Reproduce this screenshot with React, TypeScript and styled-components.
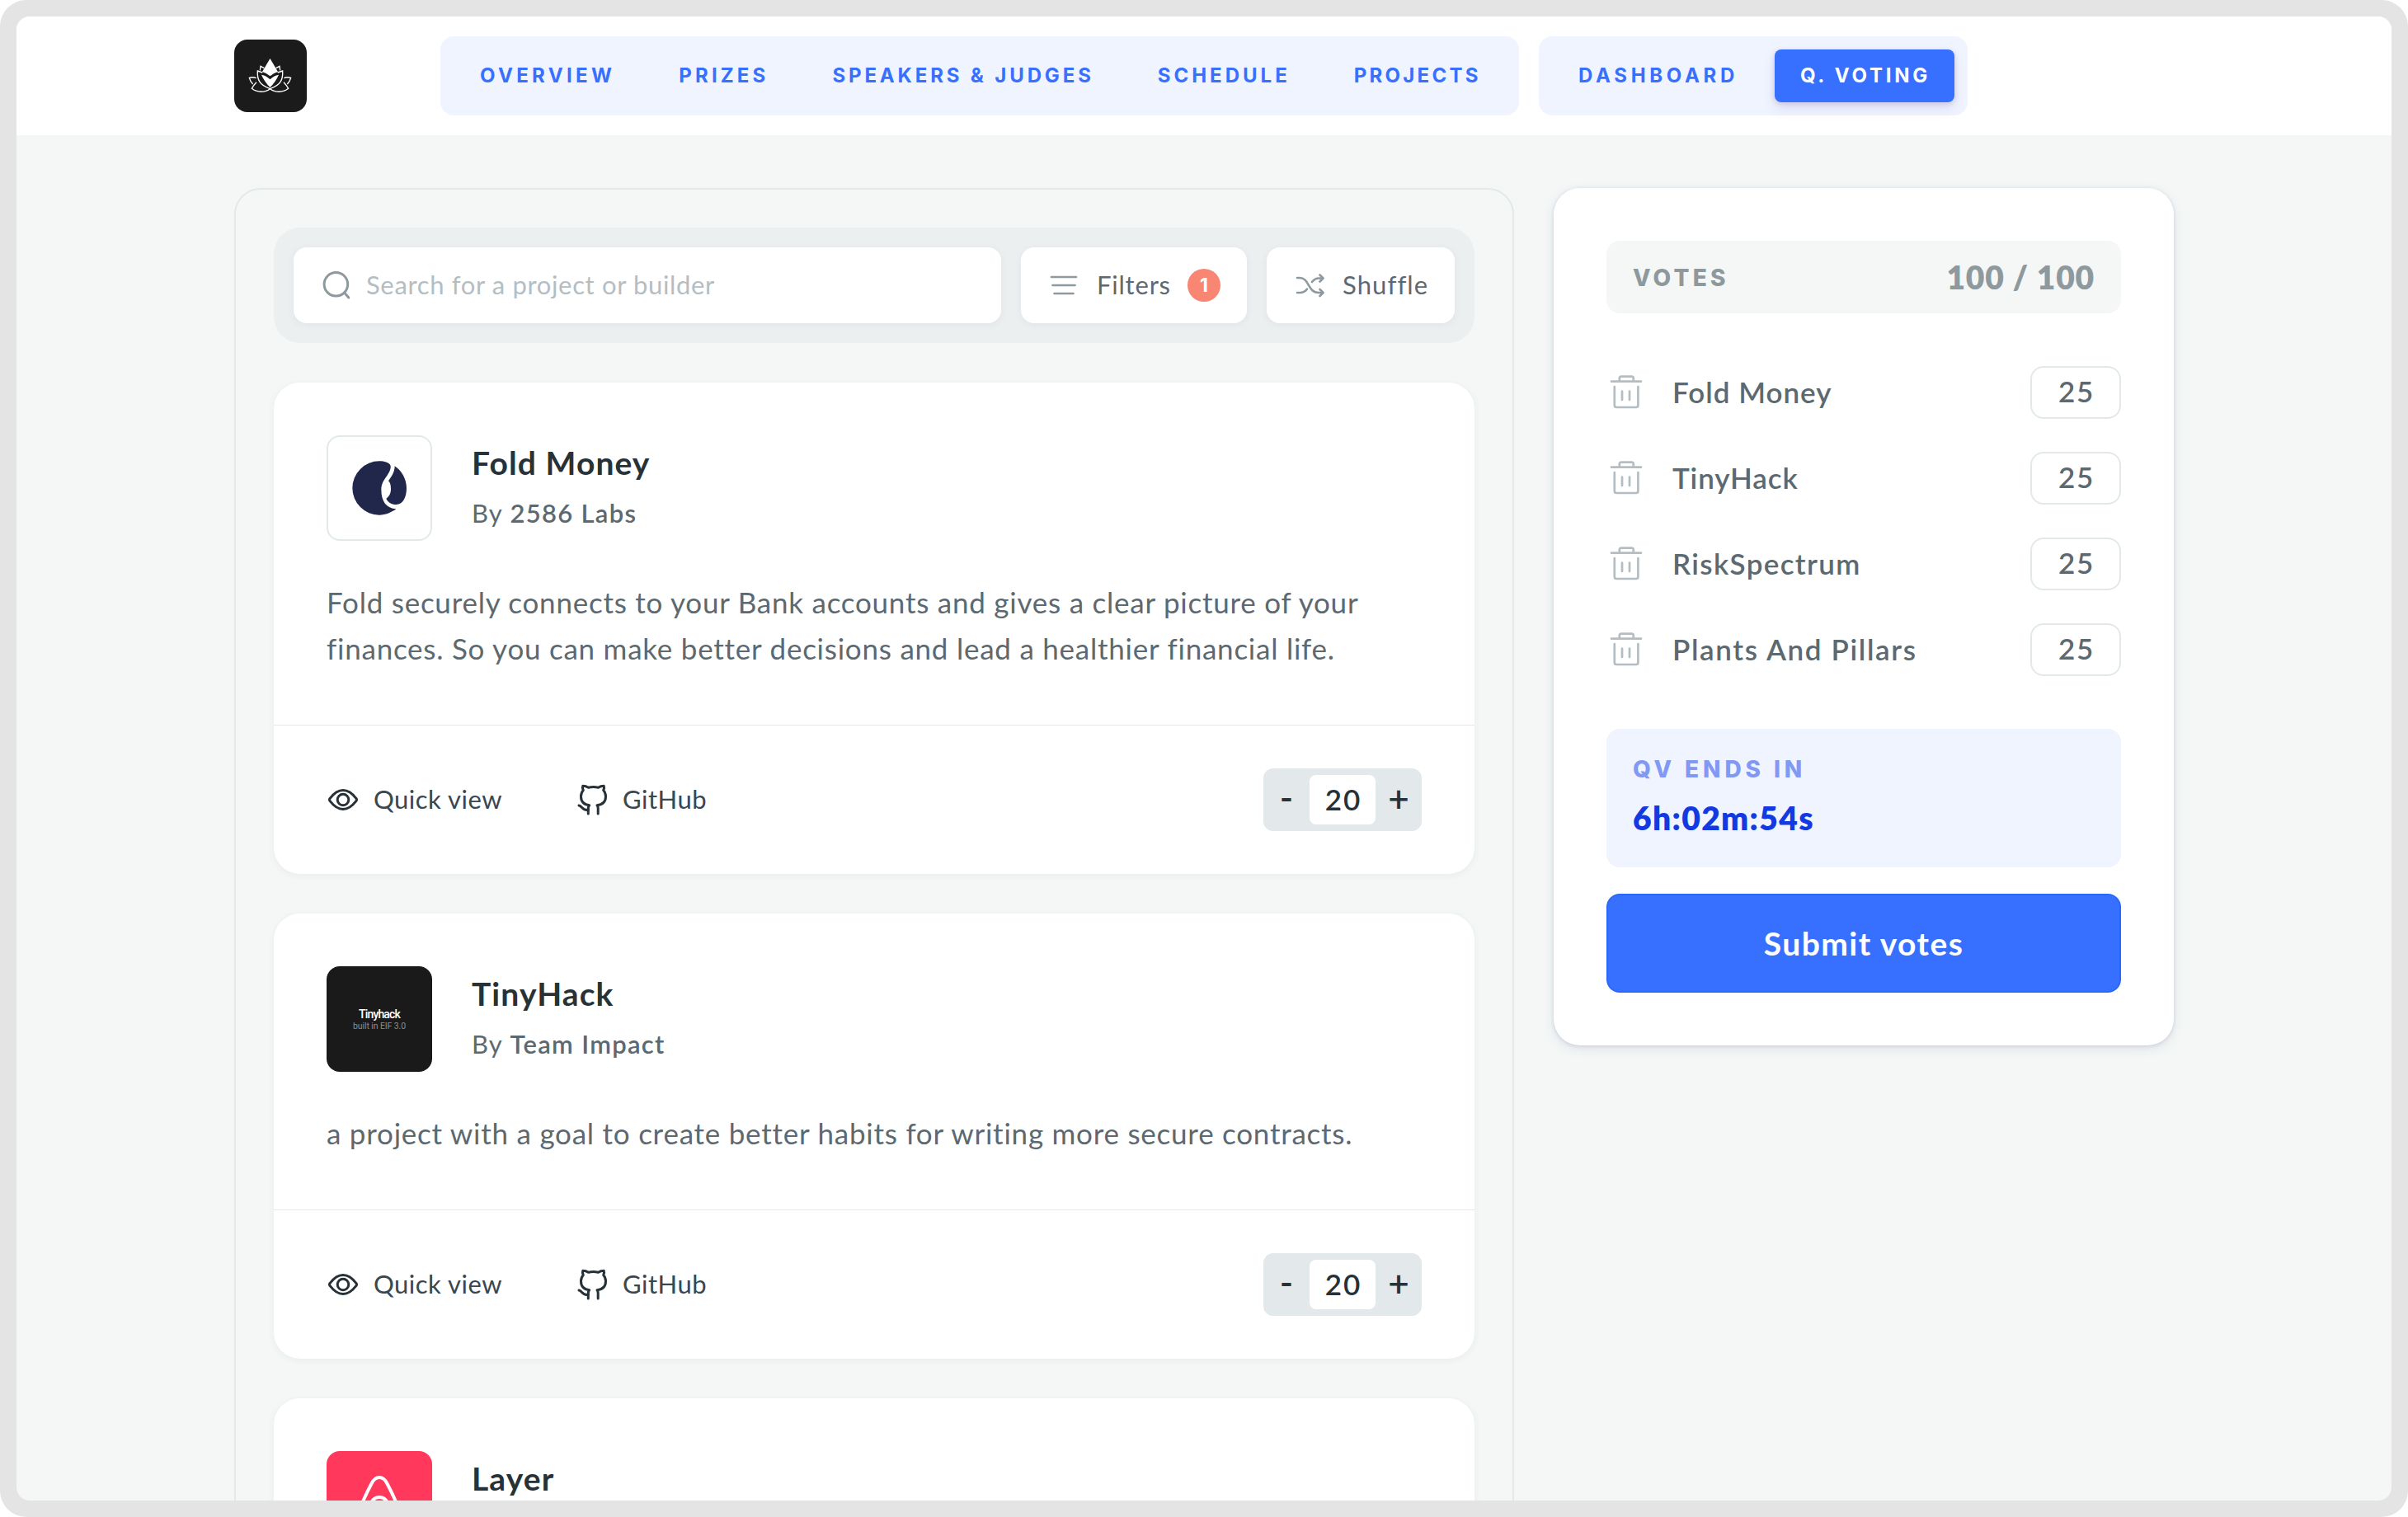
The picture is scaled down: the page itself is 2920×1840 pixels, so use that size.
import React from "react";
import styled, { createGlobalStyle } from "styled-components";

const colors = {
	blue: "#3770ff",
	blueTint: "#f0f4ff",
	page: "#f4f7f6",
	line: "#e3e9eb",
	ink: "#273238",
	body: "#5c6970",
	muted: "#8e999e",
	faint: "#b4bec2",
};

const heading = `"Inter", "Montserrat", sans-serif`;

const GlobalStyle = createGlobalStyle`
	* {
		box-sizing: border-box;
	}
	body {
		margin: 0;
		background: #fff;
		font-family: "Lato", "Nunito", sans-serif;
		color: ${colors.body};
	}
	button {
		border: 0;
		margin: 0;
		padding: 0;
		background: none;
		font: inherit;
		color: inherit;
	}
	svg {
		display: block;
		flex: none;
	}
`;

const Frame = styled.div`
	width: 2920px;
	height: 1840px;
	padding: 20px;
	border-radius: 32px;
	background: #e4e4e4;
`;

const Screen = styled.div`
	height: 1800px;
	border-radius: 16px;
	background: ${colors.page};
	overflow: hidden;
`;

/* header */

const Header = styled.header`
	display: flex;
	align-items: center;
	height: 144px;
	padding-left: 264px;
	background: #fff;
`;

const Brand = styled.div`
	width: 88px;
	height: 88px;
	margin-right: 162px;
	border-radius: 16px;
	background: #1b1b1b;
`;

const NavGroup = styled.nav<{ $width: number }>`
	display: flex;
	align-items: center;
	width: ${(p) => p.$width}px;
	height: 96px;
	padding: 0 8px;
	margin-right: 24px;
	border-radius: 16px;
	background: ${colors.blueTint};
`;

const NavItem = styled.a<{ $tracking: number }>`
	padding: 0 37px 0 40px;
	font: 700 24px/64px ${heading};
	letter-spacing: ${(p) => p.$tracking}px;
	white-space: nowrap;
	color: ${colors.blue};
`;

const ActiveNavItem = styled(NavItem)`
	flex: none;
	width: 218px;
	margin: 0 8px 0 auto;
	padding: 0 0 0 31px;
	border-radius: 8px;
	background: ${colors.blue};
	color: #fff;
	box-shadow: 0 8px 16px rgba(60, 40, 130, 0.1), 0 2px 6px rgba(60, 40, 130, 0.16);
`;

/* layout */

const Main = styled.main`
	display: flex;
	align-items: flex-start;
	gap: 48px;
	padding: 64px 264px 0;
`;

const Panel = styled.section`
	display: flex;
	flex-direction: column;
	flex: none;
	gap: 48px;
	width: 1552px;
	padding: 46px;
	border: 2px solid ${colors.line};
	border-radius: 32px;
`;

/* toolbar */

const Toolbar = styled.div`
	display: flex;
	gap: 24px;
	height: 140px;
	padding: 24px;
	border-radius: 32px;
	background: #ebeff0;
`;

const Tool = styled.div<{ $width?: number }>`
	display: flex;
	align-items: center;
	flex: ${(p) => (p.$width ? "none" : 1)};
	width: ${(p) => (p.$width ? `${p.$width}px` : "auto")};
	padding: 0 32px;
	border-radius: 16px;
	background: #fff;
	box-shadow: 0 2px 10px rgba(60, 60, 110, 0.06);
`;

const Placeholder = styled.span`
	padding: 0 0 3px 16px;
	font-size: 31px;
	letter-spacing: 0.65px;
	color: ${colors.faint};
`;

const ToolLabel = styled.span<{ $tracking: number }>`
	flex: 1;
	padding: 0 0 3px 20px;
	font-size: 31px;
	letter-spacing: ${(p) => p.$tracking}px;
	white-space: nowrap;
`;

const Badge = styled.span`
	width: 40px;
	height: 40px;
	border-radius: 50%;
	background: #f98573;
	font: 700 23px/40px ${heading};
	text-align: center;
	color: #fff;
`;

/* project card */

const Card = styled.article`
	border-radius: 32px;
	background: #fff;
	box-shadow: 0 2px 10px rgba(60, 50, 110, 0.06);
`;

const CardBody = styled.div`
	padding: 64px 64px 65px;
	border-bottom: 1px solid ${colors.line};
`;

const CardHead = styled.div`
	display: flex;
	gap: 48px;
	height: 128px;
`;

const Thumb = styled.div<{ $bg: string; $outlined?: boolean }>`
	display: flex;
	flex-direction: column;
	align-items: center;
	justify-content: center;
	width: 128px;
	height: 128px;
	border: ${(p) => (p.$outlined ? `2px solid ${colors.line}` : "0")};
	border-radius: 16px;
	background: ${(p) => p.$bg};
`;

const ThumbTitle = styled.span`
	padding-top: 2px;
	font: 500 14px/16px "Roboto", sans-serif;
	letter-spacing: -0.85px;
	color: #fff;
`;

const ThumbNote = styled.span`
	font: 400 10.5px/14px "Roboto", sans-serif;
	letter-spacing: -0.1px;
	color: #8c8c8c;
`;

const Title = styled.h2`
	margin: 5px 0 9px;
	font-size: 39px;
	line-height: 56px;
	font-weight: 700;
	letter-spacing: 1.1px;
	color: ${colors.ink};
`;

const Author = styled.p`
	margin: 0;
	font-size: 31px;
	line-height: 48px;
	letter-spacing: 1.2px;

	b {
		font-weight: 600;
		letter-spacing: 1.3px;
	}
`;

const Description = styled.p`
	margin: 46px 0 0;
	font-size: 35px;
	line-height: 56px;
	letter-spacing: 0.76px;
`;

const CardFooter = styled.div`
	display: flex;
	align-items: center;
	gap: 88px;
	height: 180px;
	padding: 0 64px;
	color: ${colors.ink};
`;

const Action = styled.button`
	display: flex;
	align-items: center;
	gap: 17px;
	min-width: 214px;

	span {
		padding-bottom: 2px;
		font-size: 31px;
		letter-spacing: 0.5px;
		color: #3a474e;
	}
`;

const Stepper = styled.div`
	display: flex;
	align-items: center;
	width: 192px;
	height: 76px;
	margin-left: auto;
	border-radius: 12px;
	background: #e3e8ea;
`;

const StepButton = styled.button<{ $lift: number }>`
	width: 56px;
	padding-bottom: ${(p) => p.$lift}px;
	font-size: 44px;
	line-height: 56px;
	font-weight: 600;
	text-align: center;
`;

const StepValue = styled.span`
	width: 80px;
	height: 60px;
	padding-left: 2px;
	border-radius: 8px;
	background: #fff;
	font-size: 35px;
	line-height: 58px;
	font-weight: 600;
	letter-spacing: 2px;
	text-align: center;
`;

/* votes sidebar */

const Sidebar = styled.aside`
	flex: none;
	width: 752px;
	padding: 64px;
	border-radius: 32px;
	background: #fff;
	box-shadow: 0 4px 14px rgba(50, 45, 110, 0.1), 0 1px 4px rgba(50, 45, 110, 0.14);
`;

const Total = styled.div`
	display: flex;
	align-items: center;
	justify-content: space-between;
	height: 88px;
	padding: 0 32px;
	border-radius: 16px;
	background: ${colors.page};
	color: ${colors.muted};

	strong {
		font-size: 39px;
		font-weight: 800;
		letter-spacing: 0.8px;
	}
`;

const Caption = styled.span<{ $tracking: number; $color: string }>`
	padding-top: 1px;
	font: 800 28px/34px ${heading};
	letter-spacing: ${(p) => p.$tracking}px;
	color: ${(p) => p.$color};
`;

const VoteList = styled.div`
	display: flex;
	flex-direction: column;
	gap: 40px;
	padding: 64px 0;
`;

const VoteRow = styled.div`
	display: flex;
	align-items: center;
	gap: 32px;
	height: 64px;
`;

const VoteName = styled.span<{ $tracking: number }>`
	flex: 1;
	padding-bottom: 3px;
	font-size: 35px;
	font-weight: 600;
	letter-spacing: ${(p) => p.$tracking}px;
`;

const VoteCount = styled.span`
	width: 110px;
	height: 64px;
	padding-left: 2px;
	border: 2px solid ${colors.line};
	border-radius: 16px;
	font-size: 35px;
	line-height: 57px;
	font-weight: 600;
	letter-spacing: 1.8px;
	text-align: center;
`;

const Countdown = styled.div`
	display: flex;
	flex-direction: column;
	gap: 14px;
	height: 168px;
	padding: 31px 32px 0;
	margin-bottom: 32px;
	border-radius: 16px;
	background: ${colors.blueTint};

	time {
		font-size: 39px;
		line-height: 56px;
		font-weight: 800;
		letter-spacing: 1.33px;
		color: #1339e0;
	}
`;

const Submit = styled.button`
	display: block;
	width: 100%;
	height: 120px;
	border: 2px solid #2a68fb;
	border-radius: 16px;
	background: ${colors.blue};
	font-size: 39px;
	font-weight: 700;
	letter-spacing: 1.46px;
	color: #fff;
`;

/* icons */

const Stroke = styled.svg.attrs({ fill: "none", strokeLinecap: "round", strokeLinejoin: "round" })<{ $color?: string }>`
	stroke: ${(p) => p.$color || "currentColor"};
`;

const LotusIcon = () => (
	<svg width="88" height="88" viewBox="42 54 264 264" fill="none" stroke="#fff" strokeWidth="4">
		<path d="M172.500 123L201 171Q185 176 172.500 187Q160 176 144 171Z" fill="#fff" stroke="none" />
		<path d="M141 182Q160 186 172.500 199Q185 186 204 182Q193 207 172.500 228Q152 207 141 182Z" fill="#fff" stroke="none" />
		<path d="M145 174L127 168C125 200 134 220 172.500 233C211 220 220 200 218 168L200 174" />
		<path d="M136 166L138 151L151 158M209 166L207 151L194 158" />
		<path d="M122 194Q110 189 97 193Q100 206 110 216M223 194Q235 189 248 193Q245 206 235 216" />
		<path d="M123 209Q112 220 106 232C125 248 155 247 172.500 233C190 247 220 248 239 232Q233 220 222 209" />
	</svg>
);

const SearchIcon = () => (
	<Stroke width="40" height="40" viewBox="0 0 40 40" strokeWidth="3" $color={colors.muted}>
		<circle cx="19.400" cy="18.800" r="14.300" />
		<path d="M30 29.500L34.800 35" />
	</Stroke>
);

const FilterIcon = () => (
	<Stroke width="40" height="40" viewBox="0 0 40 40" strokeWidth="2.700" $color={colors.muted}>
		<path d="M5 10H35M6.500 20H33.500M8.500 30H31.500" />
	</Stroke>
);

const ShuffleIcon = () => (
	<Stroke width="40" height="40" viewBox="0 0 40 40" strokeWidth="2.600" $color={colors.muted}>
		<path d="M5 11H8C20 11 17.500 29 31 29H36M5 29H8Q14 29 17 24.500M23 16Q26.500 11.500 31 11.500H36" />
		<path d="M32.500 7.500L36.500 11.500L32.500 15.500M32.500 25L36.500 29L32.500 33" />
	</Stroke>
);

const EyeIcon = () => (
	<Stroke width="40" height="40" viewBox="0 0 40 40" strokeWidth="3">
		<path d="M4.200 21.700Q2.800 20 4.200 18.300C9 12 14 8.500 20 8.500S31 12 35.800 18.300Q37.200 20 35.800 21.700C31 28 26 31.500 20 31.500S9 28 4.200 21.700Z" />
		<circle cx="20" cy="20" r="6.800" />
	</Stroke>
);

const GitHubIcon = () => (
	<Stroke width="40" height="40" viewBox="0 0 40 40" strokeWidth="3">
		<path d="M15.300 37V30.500Q15.300 28 16.700 26.800C10 26 6.500 22 6.500 16Q6.500 11.500 9.300 8.500Q7.800 5.500 8.800 3.200Q12.500 3.200 15.500 5.200Q21.500 4 27.500 5.200Q30.500 3.200 34.200 3.200Q35.200 5.500 33.700 8.500Q36.500 11.500 36.500 16C36.500 22 33 26 26 26.800Q27.200 28 27.200 30.500V37" />
		<path d="M4 27C8 27.500 7.500 33.500 15.300 32.300" />
	</Stroke>
);

const TrashIcon = () => (
	<Stroke width="48" height="48" viewBox="0 0 48 48" strokeWidth="2.700" $color={colors.faint}>
		<path d="M6 10.700H42M15.800 10.700V7Q15.800 4.600 18.200 4.600H30.400Q32.800 4.600 32.800 7V10.700" />
		<path d="M9.800 17V39.500Q9.800 42 12.300 42H35.900Q38.400 42 38.400 39.500V17M19 22.700V33M28 22.700V33" />
	</Stroke>
);

const FoldLogo = () => (
	<svg width="66" height="66" viewBox="111 117 198 198" fill="#20274b">
		<path d="M271 292C252 306 232 314 210 314A98 98 0 0 1 210 118C228 118 245 123 250 133C254 143 247 158 238 171C226 188 217 200 217 222C217 264 235 290 271 292Z" />
		<path d="M266 136C290 152 309 182 309 216C309 250 295 276 271 276C255 276 240 267 235 254C246 246 252 235 252 218C252 206 249 195 243 190C254 175 266 158 266 136Z" />
	</svg>
);

const LayerLogo = () => (
	<svg width="64" height="68" viewBox="0 0 64 68" fill="none" stroke="#fff" strokeWidth="4">
		<path d="M32 2C36.500 2 39 4.500 41.500 9.500C46 18 50 26 57 43C63 58 53 66 46 65C40 64.500 36 60 32 55C28 60 24 64.500 18 65C11 66 1 58 7 43C14 26 18 18 22.500 9.500C25 4.500 27.500 2 32 2Z" />
		<path d="M32 55C26 48 22 41 22 35.500C22 30 26.500 26 32 26S42 30 42 35.500C42 41 38 48 32 55Z" />
	</svg>
);

const mainNav = [
	{ label: "OVERVIEW", tracking: 4.35 },
	{ label: "PRIZES", tracking: 4.15 },
	{ label: "SPEAKERS & JUDGES", tracking: 3.85 },
	{ label: "SCHEDULE", tracking: 4 },
	{ label: "PROJECTS", tracking: 3.25 },
];

const votes = [
	{ name: "Fold Money", count: 25, tracking: 1 },
	{ name: "TinyHack", count: 25, tracking: 0.9 },
	{ name: "RiskSpectrum", count: 25, tracking: 1.35 },
	{ name: "Plants And Pillars", count: 25, tracking: 1.65 },
];

interface IProjectProps {
	title: string;
	author: string;
	thumb: React.ReactNode;
	children: React.ReactNode;
}

const Project = ({ title, author, thumb, children }: IProjectProps) => (
	<Card>
		<CardBody>
			<CardHead>
				{thumb}
				<div>
					<Title>{title}</Title>
					<Author>
						By <b>{author}</b>
					</Author>
				</div>
			</CardHead>
			<Description>{children}</Description>
		</CardBody>
		<CardFooter>
			<Action>
				<EyeIcon />
				<span>Quick view</span>
			</Action>
			<Action>
				<GitHubIcon />
				<span>GitHub</span>
			</Action>
			<Stepper>
				<StepButton $lift={8}>-</StepButton>
				<StepValue>20</StepValue>
				<StepButton $lift={4}>+</StepButton>
			</Stepper>
		</CardFooter>
	</Card>
);

const App = () => (
	<Frame>
		<GlobalStyle />
		<Screen>
			<Header>
				<Brand>
					<LotusIcon />
				</Brand>
				<NavGroup $width={1308}>
					{mainNav.map((item) => (
						<NavItem key={item.label} $tracking={item.tracking}>
							{item.label}
						</NavItem>
					))}
				</NavGroup>
				<NavGroup $width={520}>
					<NavItem $tracking={4.68}>DASHBOARD</NavItem>
					<ActiveNavItem $tracking={3.75}>Q. VOTING</ActiveNavItem>
				</NavGroup>
			</Header>
			<Main>
				<Panel>
					<Toolbar>
						<Tool>
							<SearchIcon />
							<Placeholder>Search for a project or builder</Placeholder>
						</Tool>
						<Tool $width={274}>
							<FilterIcon />
							<ToolLabel $tracking={0.8}>Filters</ToolLabel>
							<Badge>1</Badge>
						</Tool>
						<Tool $width={228}>
							<ShuffleIcon />
							<ToolLabel $tracking={1.1}>Shuffle</ToolLabel>
						</Tool>
					</Toolbar>
					<Project
						title="Fold Money"
						author="2586 Labs"
						thumb={
							<Thumb $bg="#fff" $outlined>
								<FoldLogo />
							</Thumb>
						}
					>
						Fold securely connects to your Bank accounts and gives a clear picture of your
						<br />
						finances. So you can make better decisions and lead a healthier financial life.
					</Project>
					<Project
						title="TinyHack"
						author="Team Impact"
						thumb={
							<Thumb $bg="#1a1a1a">
								<ThumbTitle>Tinyhack</ThumbTitle>
								<ThumbNote>built in EIF 3.0</ThumbNote>
							</Thumb>
						}
					>
						a project with a goal to create better habits for writing more secure contracts.
					</Project>
					<Card>
						<CardBody>
							<CardHead>
								<Thumb $bg="#ff385c">
									<LayerLogo />
								</Thumb>
								<Title>Layer</Title>
							</CardHead>
						</CardBody>
					</Card>
				</Panel>
				<Sidebar>
					<Total>
						<Caption $tracking={4.2} $color={colors.muted}>
							VOTES
						</Caption>
						<strong>100 / 100</strong>
					</Total>
					<VoteList>
						{votes.map((vote) => (
							<VoteRow key={vote.name}>
								<TrashIcon />
								<VoteName $tracking={vote.tracking}>{vote.name}</VoteName>
								<VoteCount>{vote.count}</VoteCount>
							</VoteRow>
						))}
					</VoteList>
					<Countdown>
						<Caption $tracking={4.9} $color="#8298f5">
							QV ENDS IN
						</Caption>
						<time>6h:02m:54s</time>
					</Countdown>
					<Submit>Submit votes</Submit>
				</Sidebar>
			</Main>
		</Screen>
	</Frame>
);

export default App;
